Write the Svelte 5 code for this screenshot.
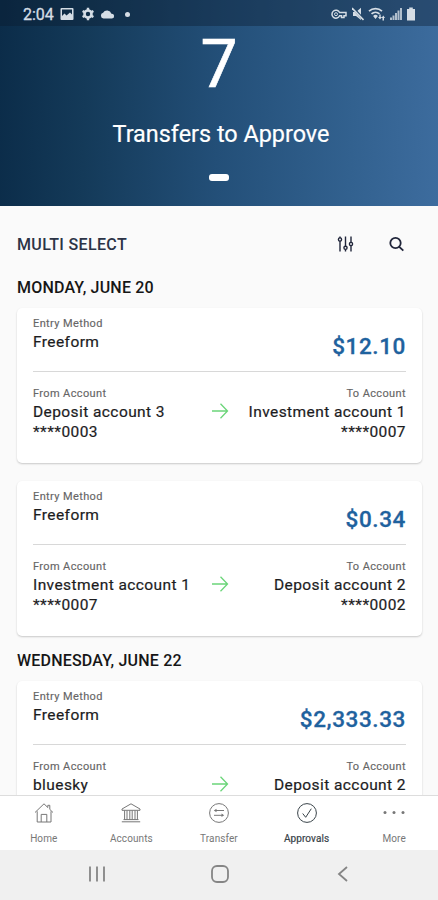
<script lang="ts">
	type Transfer = { amount: string; from: string[]; to: string[] };
	type Day = { date: string; items: Transfer[] };

	const days: Day[] = [
		{
			date: 'MONDAY, JUNE 20',
			items: [
				{ amount: '$12.10', from: ['Deposit account 3', '****0003'], to: ['Investment account 1', '****0007'] },
				{ amount: '$0.34', from: ['Investment account 1', '****0007'], to: ['Deposit account 2', '****0002'] }
			]
		},
		{
			date: 'WEDNESDAY, JUNE 22',
			items: [{ amount: '$2,333.33', from: ['bluesky'], to: ['Deposit account 2'] }]
		}
	];

	const tabs = ['Home', 'Accounts', 'Transfer', 'Approvals', 'More'];
	let active = $state('Approvals');
</script>

{#snippet tabIcon(name: string)}
	<svg class="tab-icon" width="22" height="22" viewBox="0 0 22 22">
		{#if name === 'Home'}
			<path d="M2 10.5 11 1.8l3.8 3.7V3.3h2v4.1l3.2 3.1M4.2 9.3V20H18V9.3M8.2 20v-7.6h5.6V20" />
		{:else if name === 'Accounts'}
			<path d="M2 7 11 1.8 20 7v1.3H2zM3.5 17.6h15M1.8 19.8h18.4M4.6 8.5v9M7 8.5v9M9.8 8.5v9M12.2 8.5v9M15 8.5v9M17.4 8.5v9" />
		{:else if name === 'Transfer'}
			<circle cx="11" cy="11" r="9.4" />
			<path d="M16 8.5H7M6 13.3h9" />
			<path d="M8.5 6.7v3.6L5.8 8.5zM13.5 11.5v3.6l2.7-1.8z" fill="currentColor" stroke="none" />
		{:else if name === 'Approvals'}
			<circle cx="11" cy="11" r="9.4" />
			<path d="m6.7 11.5 3 3.8 5.6-8.6" />
		{:else}
			<g class="dots">
				<circle cx="2" cy="10.5" r="1.5" />
				<circle cx="11" cy="10.5" r="1.5" />
				<circle cx="20" cy="10.5" r="1.5" />
			</g>
		{/if}
	</svg>
{/snippet}

<div class="screen">
	<header>
		<div class="status">
			<span class="time">2:04</span>
			<svg width="14" height="14" viewBox="0 0 14 14">
				<path fill-rule="evenodd" d="M1.5 1h11a1 1 0 0 1 1 1v10a1 1 0 0 1-1 1h-11a1 1 0 0 1-1-1V2a1 1 0 0 1 1-1zm.5 1.5V9l2.5-2.5 2 2L10 5.5l2 2v-5z" />
			</svg>
			<svg class="gear" width="14" height="14" viewBox="0 0 14 14">
				<circle cx="7" cy="7" r="3.5" fill="none" stroke="#d5dde5" stroke-width="2.6" />
				<path d="M5.8.8h2.4v3H5.8zM5.8 10.2h2.4v3H5.8zM1 5l1.2-2.1 2.6 1.5L3.6 6.5zM9.2 9.6l1.2-2.1L13 9l-1.2 2.1zM13 5l-1.2-2.1-2.6 1.5 1.2 2.1zM4.8 9.6 3.6 7.5 1 9l1.2 2.1z" />
			</svg>
			<svg class="cloud" width="15" height="14" viewBox="0 0 15 14">
				<path d="M3.5 11.5a2.9 2.9 0 0 1-.4-5.7 4.5 4.5 0 0 1 8.3.9 2.4 2.4 0 0 1 .6 4.8z" />
			</svg>
			<span class="notice"></span>
			<div class="signals">
				<svg class="key" width="16" height="14" viewBox="0 0 16 14">
					<path fill="none" stroke="#d5dde5" stroke-width="1.5" d="M8.6 5.5A4 4 0 1 0 8.6 8.8H10.5V10.5H13V8.8H15V5.5z" />
					<circle cx="5" cy="7.2" r="1.5" fill="none" stroke="#d5dde5" />
				</svg>
				<svg width="12" height="14" viewBox="0 0 12 14">
					<path d="M1 5h3l5-4.2V13L4 9H1z" />
					<path fill="none" stroke="#244767" stroke-width="2.6" d="m1 1 11 12" />
					<path fill="none" stroke="#d5dde5" stroke-width="1.6" d="m0 1 11.5 12" />
				</svg>
				<svg width="18" height="14" viewBox="0 0 18 14">
					<path fill="none" stroke="#d5dde5" stroke-width="1.7" d="M1 4.2a9.5 9.5 0 0 1 13 0M3.5 6.8a6 6 0 0 1 8 0" />
					<path d="m7.5 12-2.4-3a3.5 3.5 0 0 1 4.8 0zM10 10h1.3V7.5h1.4V10H14l-2 2.5zM13.5 11 15.3 8.5 17 11h-1v2.5h-1.5V11z" />
				</svg>
				<svg width="12" height="14" viewBox="0 0 12 14">
					<path d="M0 13v-2.5h2V13zM2.5 13V8.5h2V13zM5 13V6h2v7zM7.5 13V3.5h2V13zM10 13V1h2v12z" opacity=".8" />
				</svg>
				<svg width="10" height="14" viewBox="0 0 10 14">
					<path d="M3.2.5h3.6V2H9v11.5H1V2h2.2z" />
				</svg>
			</div>
		</div>
		<div class="count">7</div>
		<div class="caption">Transfers to Approve</div>
		<div class="pager"></div>
	</header>

	<main>
		<div class="toolbar">
			<span class="multi">MULTI SELECT</span>
			<svg class="filter" width="18" height="18" viewBox="0 0 18 18">
				<path d="M4 1.5V3M4 6v10.5M9.5 1.5v9.8M9.5 14.5v2M15 1.5v6M15 10.5v6" />
				<circle cx="4" cy="4.5" r="1.6" />
				<circle cx="9.5" cy="12.8" r="1.6" />
				<circle cx="15" cy="9" r="1.6" />
			</svg>
			<svg class="search" width="18" height="18" viewBox="0 0 18 18">
				<circle cx="8.5" cy="8" r="5.2" />
				<path d="m12.3 11.8 4 3.8" />
			</svg>
		</div>

		{#each days as day}
			<h2>{day.date}</h2>
			{#each day.items as item}
				<div class="card">
					<div class="entry">
						<div>
							<div class="label">Entry Method</div>
							<div class="value">Freeform</div>
						</div>
						<div class="amount">{item.amount}</div>
					</div>
					<div class="accounts">
						<div>
							<div class="label">From Account</div>
							{#each item.from as line}
								<div class="value">{line}</div>
							{/each}
						</div>
						<svg class="arrow" width="18" height="18" viewBox="0 0 18 18">
							<path d="M1 9h15.5M9.5 1.8 16.5 9l-7 7.2" />
						</svg>
						<div class="right">
							<div class="label">To Account</div>
							{#each item.to as line}
								<div class="value">{line}</div>
							{/each}
						</div>
					</div>
				</div>
			{/each}
		{/each}
	</main>

	<nav class="tabs">
		{#each tabs as tab}
			<button class:active={active === tab} onclick={() => active = tab}>
				{@render tabIcon(tab)}
				<span>{tab}</span>
			</button>
		{/each}
	</nav>

	<div class="sysnav">
		<svg width="20" height="20" viewBox="0 0 20 20"><path d="M3 2.5v15M10 2.5v15M17 2.5v15" /></svg>
		<svg width="20" height="20" viewBox="0 0 20 20"><rect x="2" y="2" width="16" height="16" rx="5" /></svg>
		<svg width="20" height="20" viewBox="0 0 20 20"><path d="m14 3-8 7 8 7" /></svg>
	</div>
</div>

<style>
	:global(body) {
		margin: 0;
	}

	.screen {
		width: 438px;
		height: 900px;
		display: flex;
		flex-direction: column;
		overflow: hidden;
		background: #fafafa;
		color: #1c1c1e;
		font-family: Roboto, "Liberation Sans", sans-serif;
	}

	header {
		flex: none;
		height: 206px;
		display: flex;
		flex-direction: column;
		align-items: center;
		background: linear-gradient(92deg, #0b2c49 0%, #143a59 20%, #234f78 50%, #32618f 80%, #3d6c9e 100%);
		color: #fff;
	}

	.status {
		width: 100%;
		height: 26px;
		box-sizing: border-box;
		padding: 2px 22px 0 23px;
		display: flex;
		align-items: center;
		background: rgba(10, 25, 45, 0.38);
		color: #d5dde5;
		fill: #d5dde5;
	}

	.time {
		width: 37px;
		font-size: 16px;
		-webkit-text-stroke: 0.3px;
	}

	.gear {
		margin-left: 7px;
	}

	.cloud {
		margin-left: 5px;
	}

	.notice {
		width: 5px;
		height: 5px;
		margin-left: 10px;
		border-radius: 50%;
		background: #d5dde5;
	}

	.signals {
		margin-left: auto;
		display: flex;
		gap: 4px;
	}

	.key {
		margin-right: 1px;
	}

	.count {
		margin-top: 2px;
		font-size: 66px;
		line-height: 74px;
		-webkit-text-stroke: 0.6px;
	}

	.caption {
		margin: 18px 0 0 4px;
		font-size: 23.4px;
		line-height: 28px;
		-webkit-text-stroke: 0.2px;
	}

	.pager {
		width: 20px;
		height: 7px;
		margin-top: 26px;
		border-radius: 3px;
		background: #fff;
	}

	main {
		flex: 1;
		min-height: 0;
		padding: 0 16px 0 17px;
		overflow: hidden;
	}

	.toolbar {
		height: 77px;
		box-sizing: border-box;
		display: flex;
		align-items: center;
		padding: 0 17px 1px 0;
		fill: none;
		stroke: #20253a;
		stroke-width: 1.4;
	}

	.multi {
		margin-right: auto;
		color: #2b3346;
		font-size: 16px;
		font-weight: 500;
		letter-spacing: 0.35px;
	}

	.search {
		margin-left: 33px;
		stroke-width: 1.8;
	}

	h2 {
		margin: 0 0 15px;
		font-size: 16px;
		font-weight: 500;
		line-height: 10px;
		letter-spacing: 0.2px;
		color: #161616;
	}

	.card + h2 {
		margin-top: 20px;
	}

	.card {
		height: 155px;
		box-sizing: border-box;
		margin-bottom: 18px;
		padding: 9px 16px 0;
		border-radius: 5px;
		background: #fff;
		box-shadow: 0 1px 2px rgba(0, 0, 0, 0.2);
	}

	.entry {
		height: 54px;
		display: flex;
		justify-content: space-between;
		border-bottom: 1px solid #d8d8d8;
	}

	.label {
		margin-bottom: 2px;
		color: #666;
		font-size: 11px;
		line-height: 14px;
		letter-spacing: 0.38px;
		-webkit-text-stroke: 0.15px;
	}

	.value {
		font-size: 15.5px;
		line-height: 19.5px;
		letter-spacing: 0.42px;
		-webkit-text-stroke: 0.2px;
	}

	.amount {
		padding-top: 15px;
		color: #1f629e;
		font-size: 22.5px;
		font-weight: 500;
		line-height: 28px;
		letter-spacing: 0.6px;
		-webkit-text-stroke: 0.3px;
	}

	.accounts {
		display: grid;
		grid-template-columns: 1fr 18px 1fr;
		padding-top: 15px;
	}

	.arrow {
		margin-top: 15px;
		fill: none;
		stroke: #6bd579;
		stroke-width: 1.3;
	}

	.right {
		display: flex;
		flex-direction: column;
		align-items: flex-end;
		white-space: nowrap;
	}

	.tabs {
		flex: none;
		height: 55px;
		box-sizing: border-box;
		display: grid;
		grid-template-columns: repeat(5, 1fr);
		border-top: 1px solid #ddd;
		background: #fff;
	}

	.tabs button {
		display: flex;
		flex-direction: column;
		align-items: center;
		gap: 8px;
		padding: 6px 0 0;
		border: 0;
		background: none;
		color: #777;
		font-family: inherit;
		font-size: 10px;
		line-height: 14px;
		letter-spacing: 0.1px;
	}

	.tabs .active {
		color: #3a444a;
		-webkit-text-stroke: 0.2px;
	}

	.tab-icon {
		overflow: visible;
		fill: none;
		stroke: currentColor;
		stroke-width: 1;
	}

	.dots {
		fill: currentColor;
		stroke: none;
	}

	.sysnav {
		flex: none;
		height: 50px;
		box-sizing: border-box;
		display: flex;
		align-items: center;
		justify-content: space-between;
		padding: 0 85px 2px 87px;
		background: #f0f0f0;
		fill: none;
		stroke: #858585;
		stroke-width: 1.8;
	}
</style>
